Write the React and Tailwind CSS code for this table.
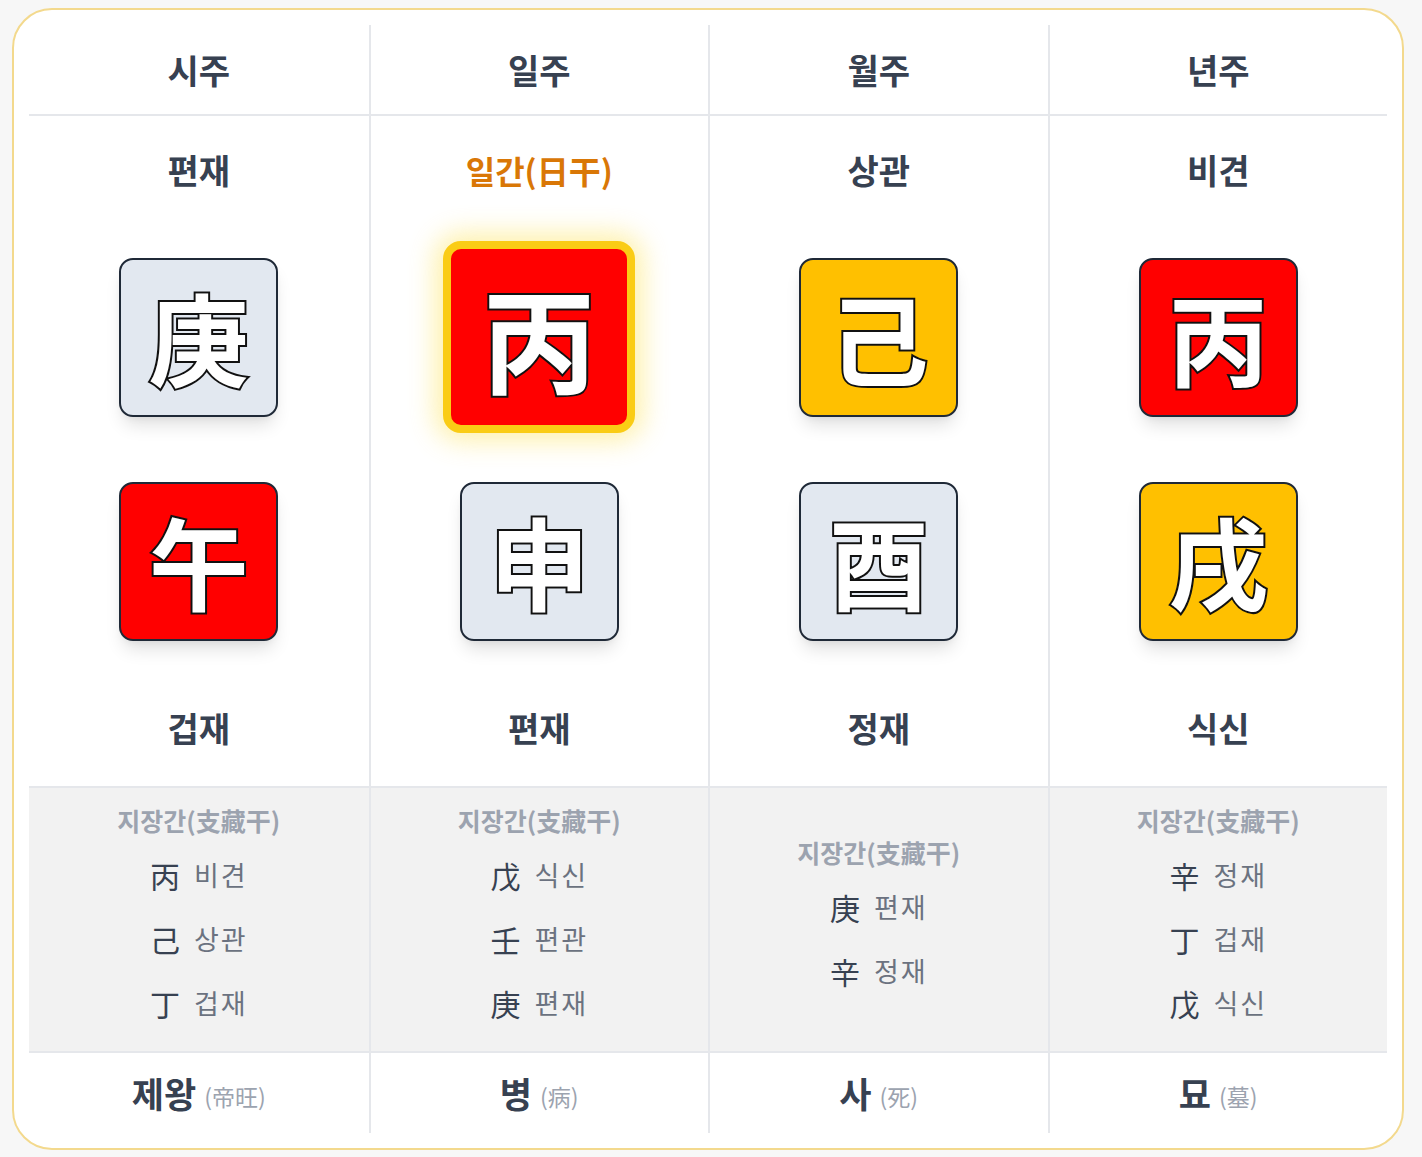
const pillars = [
    {
        title: '시주',
        stemGod: '편재',
        stem: { ch: '庚', color: 'bg-[#e2e8f0]' },
        branch: { ch: '午', color: 'bg-[#ff0000]' },
        branchGod: '겁재',
        hidden: [['丙', '비견'], ['己', '상관'], ['丁', '겁재']],
        stage: '제왕',
        stageHanja: '(帝旺)',
    },
    {
        title: '일주',
        stemGod: '일간(日干)',
        isDay: true,
        stem: { ch: '丙', color: 'bg-[#ff0000]' },
        branch: { ch: '申', color: 'bg-[#e2e8f0]' },
        branchGod: '편재',
        hidden: [['戊', '식신'], ['壬', '편관'], ['庚', '편재']],
        stage: '병',
        stageHanja: '(病)',
    },
    {
        title: '월주',
        stemGod: '상관',
        stem: { ch: '己', color: 'bg-[#ffc000]' },
        branch: { ch: '酉', color: 'bg-[#e2e8f0]' },
        branchGod: '정재',
        hidden: [['庚', '편재'], ['辛', '정재']],
        stage: '사',
        stageHanja: '(死)',
    },
    {
        title: '년주',
        stemGod: '비견',
        stem: { ch: '丙', color: 'bg-[#ff0000]' },
        branch: { ch: '戌', color: 'bg-[#ffc000]' },
        branchGod: '식신',
        hidden: [['辛', '정재'], ['丁', '겁재'], ['戊', '식신']],
        stage: '묘',
        stageHanja: '(墓)',
    },
];

// white glyph with a black outline
const glyph = 'font-bold text-white leading-none [-webkit-text-stroke:4px_#111] [paint-order:stroke_fill]';

function Tile({ ch, color, big }) {
    if (big) {
        return (
            <div className={`w-[192px] h-[192px] rounded-[18px] border-[8px] border-[#facc15] ${color} flex items-center justify-center shadow-[0_0_26px_8px_rgba(253,224,71,0.45)]`}>
                <span className={`${glyph} text-[114px] pb-[2px]`}>{ch}</span>
            </div>
        );
    }
    return (
        <div className={`w-[159px] h-[159px] rounded-[14px] border-2 border-[#1f2937] ${color} flex items-center justify-center shadow-[0_12px_18px_-4px_rgba(0,0,0,0.12),0_4px_8px_-4px_rgba(0,0,0,0.08)]`}>
            <span className={`${glyph} text-[100px] pb-[2px]`}>{ch}</span>
        </div>
    );
}

export default function App() {
    const cellBorder = (i) => (i > 0 ? 'border-l-2 border-[#e5e7eb]' : '');

    return (
        <div className="min-h-screen bg-[#f7f7f7] pl-[12px] pt-[8px] pb-[7px] font-['Noto_Sans_CJK_KR','Noto_Sans',sans-serif]">
            <div className="w-[1392px] bg-white border-2 border-[#f3d98d] rounded-[40px] p-[15px]">
                {/* header */}
                <div className="grid grid-cols-4 border-b-2 border-[#e5e7eb]">
                    {pillars.map((p, i) => (
                        <div key={p.title} className={`h-[89px] flex items-center justify-center ${cellBorder(i)}`}>
                            <span className="text-[34px] font-bold text-[#374151]">{p.title}</span>
                        </div>
                    ))}
                </div>

                {/* stems and branches */}
                <div className="grid grid-cols-4 border-b-2 border-[#e5e7eb]">
                    {pillars.map((p, i) => (
                        <div key={p.title} className={`flex flex-col items-center pt-[34px] pb-[38px] ${cellBorder(i)}`}>
                            <div className={`h-10 leading-10 font-bold ${p.isDay ? 'text-[32px] text-[#d97706]' : 'text-[34px] text-[#374151]'}`}>
                                {p.stemGod}
                            </div>
                            <div className="mt-[51px] h-[192px] flex items-center justify-center">
                                <Tile ch={p.stem.ch} color={p.stem.color} big={p.isDay} />
                            </div>
                            <div className="mt-[32px] h-[192px] flex items-center justify-center">
                                <Tile ch={p.branch.ch} color={p.branch.color} />
                            </div>
                            <div className="mt-[51px] h-10 leading-10 text-[34px] font-bold text-[#374151]">
                                {p.branchGod}
                            </div>
                        </div>
                    ))}
                </div>

                {/* hidden stems */}
                <div className="grid grid-cols-4 bg-[#f2f2f2] border-b-2 border-[#e5e7eb]">
                    {pillars.map((p, i) => (
                        <div key={p.title} className={`h-[263px] flex flex-col items-center justify-center ${cellBorder(i)}`}>
                            <div className="h-8 leading-8 text-[25px] font-bold text-[#9ca3af]">지장간(支藏干)</div>
                            <div className="mt-2 flex flex-col items-center">
                                {p.hidden.map(([h, g]) => (
                                    <div key={h} className="h-16 flex items-center gap-[14px]">
                                        <span className="text-[30px] text-[#374151]">{h}</span>
                                        <span className="text-[27px] text-[#6b7280] tracking-[2px]">{g}</span>
                                    </div>
                                ))}
                            </div>
                        </div>
                    ))}
                </div>

                {/* twelve stages */}
                <div className="grid grid-cols-4">
                    {pillars.map((p, i) => (
                        <div key={p.title} className={`h-[80px] flex items-center justify-center gap-[8px] ${cellBorder(i)}`}>
                            <span className="text-[35px] font-bold text-[#374151]">{p.stage}</span>
                            <span className="text-[23px] text-[#9ca3af] mt-[6px]">{p.stageHanja}</span>
                        </div>
                    ))}
                </div>
            </div>
        </div>
    );
}
